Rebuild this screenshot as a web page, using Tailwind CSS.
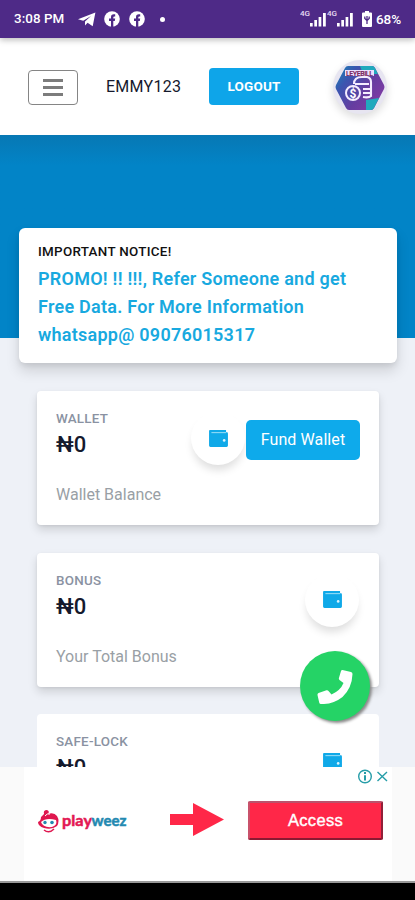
<!DOCTYPE html>
<html lang="en">
<head>
<meta charset="utf-8">
<title>Wallet dashboard</title>
<script src="https://cdn.jsdelivr.net/npm/@tailwindcss/browser@4"></script>
</head>
<body class="font-['Roboto','Noto_Sans',sans-serif]">
<svg class="hidden">
  <symbol id="wallet" viewBox="0 0 20 18"><path fill="#10a9e8" d="M1 0H18V2.500H19Q20 2.500 20 4V16.500Q20 18 18.500 18H1.500Q0 18 0 16.500V1Q0 0 1 0Z"/><circle cx="16" cy="11" r="1.400" fill="#d9f4ff"/><path d="M2.500 2.800H18" stroke="#a5e3fa" stroke-width="1"/></symbol>
  <symbol id="fb" viewBox="0 0 16 16"><circle cx="8" cy="8" r="7.8" fill="#fff"/><path d="M7 16V10H5V7.6H7V6Q7 3.2 9.8 3.2H11.2V5.5H10.3Q9.3 5.5 9.3 6.5V7.6H11.2L10.8 10H9.3V16Z" fill="#4e2a87"/></symbol>
  <symbol id="signal" viewBox="0 0 27 19"><text x="0" y="7" font-size="8" font-weight="500" fill="#e8ddf5" textLength="10">4G</text><path fill="#fff" d="M10 14h2.700v3.500H10zM14.300 11h2.700v6.500h-2.700zM18.600 8h2.700v9.500h-2.700zM23 4h2.800v13.500H23z"/></symbol>
</svg>
<div class="relative flex h-[900px] w-[415px] flex-col overflow-hidden bg-[#eef1f7]">
  <div class="relative z-10 flex h-[38px] shrink-0 items-center bg-[#4e2a87] pl-[14px] text-[13.4px] font-medium text-white shadow-[0_2px_6px_#0004]">
    <span class="w-[64px] whitespace-nowrap tracking-[0.05px]">3:08 PM</span>
    <svg class="h-[15px] w-[18px]" viewBox="0 0 18 15"><path fill="#fff" d="M0 7.2L17.4.5L14.7 14.2L9.6 10.8L7 13.6V9.5L13 4L5.2 8.8Z"/></svg>
    <svg class="ml-[8px] size-4"><use href="#fb"/></svg>
    <svg class="ml-[9px] size-4"><use href="#fb"/></svg>
    <i class="ml-[15px] size-[5px] rounded-full bg-white"></i>
    <svg class="mb-[2px] ml-[135px] h-[19px] w-[27px]"><use href="#signal"/></svg>
    <svg class="mb-[2px] h-[19px] w-[27px]"><use href="#signal"/></svg>
    <svg class="ml-[8px] h-[16px] w-[10px]" viewBox="0 0 10 16"><path fill="#fff" d="M3 0H7V1.5H9Q10 1.5 10 2.5V15Q10 16 9 16H1Q0 16 0 15V2.5Q0 1.5 1 1.5H3Z"/><path d="M5 13V5M2.8 5.5V7.5L5 9.5L7.2 7.5V5.5" fill="none" stroke="#4e2a87" stroke-width="1.3"/></svg>
    <span class="ml-[4px] text-[13.500px] tracking-[-0.1px]">68%</span>
  </div>
  <header class="flex h-[97px] shrink-0 items-center bg-white pl-[28px]">
    <button class="mt-[1px] flex h-[35px] w-[50px] flex-col items-center justify-center gap-[4px] rounded-[4px] border border-[#858585]">
      <i class="h-[3px] w-[20px] bg-[#7c7c7c]"></i><i class="h-[3px] w-[20px] bg-[#7c7c7c]"></i><i class="h-[3px] w-[20px] bg-[#7c7c7c]"></i>
    </button>
    <span class="ml-[28px] w-[103px] text-[16px] tracking-[0.25px] text-[#15192d]">EMMY123</span>
    <button class="flex h-[37px] w-[90px] items-center justify-center rounded-[4px] bg-[#0ea5e9] text-[13.500px] font-bold tracking-[0.2px] text-white">LOGOUT</button>
    <div class="ml-[34px] flex size-[54px] items-center justify-center rounded-full bg-[#e7e5f1] shadow-[0_4px_9px_#0002]">
      <svg class="h-[50px] w-[50px]" viewBox="0 0 50 50">
        <defs><linearGradient id="lg" x2="1" y2=".7"><stop stop-color="#148bb5"/><stop offset=".3" stop-color="#3b55b0"/><stop offset=".65" stop-color="#653da0"/><stop offset="1" stop-color="#803ba4"/></linearGradient></defs>
        <path fill="url(#lg)" d="M13 4H37Q39 4 40 6L49 23Q50 25 49 27L39 46Q38 48 36 48H14Q12 48 11 46L1 27Q0 25 1 23L10 6Q11 4 13 4Z"/>
        <path fill="#20a9bd" d="M25 4H37Q39 4 40 6L43 12H28ZM31 38L44 36L39 46Q38 48 36 48H31Z"/>
        <rect x="10" y="8" width="29" height="6" fill="#eadfff"/><text x="11" y="14" font-size="7" font-weight="700" fill="#7b285d" textLength="27">LEYEBILL</text>
        <path d="M19 22Q19 15 27 15H32Q36 16 36 20V34Q34 36 28 35M20 22H34M28 27H35M28 31H35" fill="none" stroke="#f4edff" stroke-width="2.1"/>
        <circle cx="18" cy="31" r="7" fill="#5147a6" stroke="#f4edff" stroke-width="2"/><text x="18" y="35.5" text-anchor="middle" font-size="12" font-weight="700" fill="#fff">$</text>
      </svg>
    </div>
  </header>
  <div class="h-[203px] shrink-0 bg-linear-to-b from-[#0778b4] to-[#0284c7] to-15%"></div>
  <section class="relative mx-[19px] -mt-[110px] mr-[18px] h-[135px] shrink-0 rounded-[6px] bg-white pt-[15px] pl-[19px] shadow-[0_8px_14px_#0002,0_3px_5px_#0001]">
    <h2 class="text-[13.400px] leading-[18px] font-medium tracking-[0.3px] text-[#111]">IMPORTANT NOTICE!</h2>
    <p class="mt-[4px] text-[18px] leading-[28px] font-semibold tracking-[0.250px] whitespace-nowrap text-[#18a9df]">PROMO! !! !!!, Refer Someone and get<br>Free Data. For More Information<br>whatsapp@ 09076015317</p>
  </section>
  <main class="mt-[28px] mr-[36px] ml-[37px] flex flex-col gap-[27.5px]">
    <section class="flex h-[134px] shrink-0 justify-between rounded-[4px] bg-white pr-[19px] pl-[19px] shadow-[0_5px_10px_#0002,0_1px_3px_#0001]">
      <div class="pt-[19px]"><h3 class="text-[13.400px] leading-[18px] font-medium tracking-[0.240px] text-[#8a92a2]">WALLET</h3><p class="text-[22px] leading-[34px] font-medium text-[#15192d]">₦0</p><p class="mt-[22px] text-[16px] leading-[22px] text-[#999fa5]">Wallet Balance</p></div>
      <div class="flex pt-[20px]"><div class="mr-px flex size-[54px] items-center justify-center rounded-full bg-white shadow-[0_7px_9px_-2px_#0002]"><svg class="h-[17px] w-[19px]"><use href="#wallet"/></svg></div><button class="relative mt-[9px] h-[40px] w-[114px] rounded-[5px] bg-[#0eaaeb] text-[16px] tracking-[0.1px] text-white">Fund Wallet</button></div>
    </section>
    <section class="flex h-[134px] shrink-0 justify-between rounded-[4px] bg-white pr-[19px] pl-[19px] shadow-[0_5px_10px_#0002,0_1px_3px_#0001]">
      <div class="pt-[19px]"><h3 class="text-[13.400px] leading-[18px] font-medium tracking-[0.240px] text-[#8a92a2]">BONUS</h3><p class="text-[22px] leading-[34px] font-medium text-[#15192d]">₦0</p><p class="mt-[22px] text-[16px] leading-[22px] text-[#999fa5]">Your Total Bonus</p></div>
      <div class="pt-[20px]"><div class="mr-px flex size-[54px] items-center justify-center rounded-full bg-white shadow-[0_7px_9px_-2px_#0002]"><svg class="h-[17px] w-[19px]"><use href="#wallet"/></svg></div></div>
    </section>
    <section class="flex h-[134px] shrink-0 justify-between rounded-[4px] bg-white pr-[19px] pl-[19px]">
      <div class="pt-[19px]"><h3 class="text-[13.400px] leading-[18px] font-medium tracking-[0.240px] text-[#8a92a2]">SAFE-LOCK</h3><p class="text-[22px] leading-[34px] font-medium text-[#15192d]">₦0</p></div>
      <div class="pt-[20px]"><div class="mr-px flex size-[54px] items-center justify-center"><svg class="h-[17px] w-[19px]"><use href="#wallet"/></svg></div></div>
    </section>
  </main>
  <button class="absolute top-[651px] left-[300px] flex size-[70px] items-center justify-center rounded-full bg-[#25d366] shadow-[2px_2px_3px_#888]" aria-label="Call">
    <svg class="size-[36px]" viewBox="0 0 36 36"><path fill="#fff" d="M25.500 2L34 4Q35.500 4.500 35.500 6Q35 20 25.500 29Q16 36.500 4 36Q2.500 36 2.200 34.500L.5 27Q.3 25.700 1.500 25L9.500 22.300Q10.700 22 11.500 23L14.500 26.500Q23.500 22.500 26.500 15L22.500 12Q21.500 11 22 9.800L24 3Q24.500 1.800 25.500 2Z"/></svg>
  </button>
  <aside class="absolute inset-x-0 top-[767px] h-[133px] bg-[#fafafa]">
    <div class="ml-[24px] flex h-[114px] w-[368px] items-center bg-white pl-[14px]">
      <svg class="mt-[-4px] h-[28px] w-[94px]" viewBox="0 0 94 28">
        <path d="M6 6Q5 2 9 2Q12 3 10 6Q16 4 19 8Q22 13 19 18Q14 22 6 20Q0 18 0 14Q3 13 3 9Z" fill="#df174f"/>
        <path d="M3 14Q8 9 18 12Q20 17 14 19Q5 20 3 14Z" fill="#fff"/><path d="M7 8Q9 5 12 6" fill="none" stroke="#fff"/>
        <circle cx="7" cy="14.500" r="1.700" fill="#2389b1"/><circle cx="14" cy="14.500" r="1.800" fill="#2389b1"/><path d="M6 22Q11 26 16 21" fill="none" stroke="#df174f" stroke-width="1.500"/>
        <g font-family="Lato,sans-serif" font-weight="700" font-size="15.500" stroke-width=".5"><text x="24" y="18" fill="#e31854" stroke="#e31854" textLength="30" lengthAdjust="spacingAndGlyphs">play</text><text x="53.500" y="18" fill="#2389b1" stroke="#2389b1" textLength="35" lengthAdjust="spacingAndGlyphs">weez</text></g>
      </svg>
      <svg class="mt-[-8px] ml-[37px] h-[34px] w-[55px]" viewBox="0 0 55 34"><path fill="#ff2748" d="M1 11H24V0L55 16.500L24 33V22H1Z"/></svg>
      <button class="mt-[-8px] ml-[24px] h-[39px] w-[135px] rounded-[2px] border-2 border-t-[#bc526c] border-r-[#912039] border-b-[#8b1932] border-l-[#c9526b] bg-[#ff2748] font-['Liberation_Sans',sans-serif] text-[16.500px] tracking-[0.3px] text-white [-webkit-text-stroke:0.4px_white]">Access</button>
    </div>
    <svg class="absolute top-[2px] left-[357px] h-[15px] w-[32px]" viewBox="0 0 32 15" fill="none" stroke="#269da8" stroke-width="1.400"><circle cx="8" cy="7.500" r="6.300"/><path d="M8 3V5M8 6.300V11.500" stroke-width="2"/><path d="M20.500 3L30 12M30 3L20.500 12"/></svg>
    <div class="h-[2px] bg-[#999]"></div>
    <div class="h-[17px] bg-black"></div>
  </aside>
</div>
</body>
</html>
